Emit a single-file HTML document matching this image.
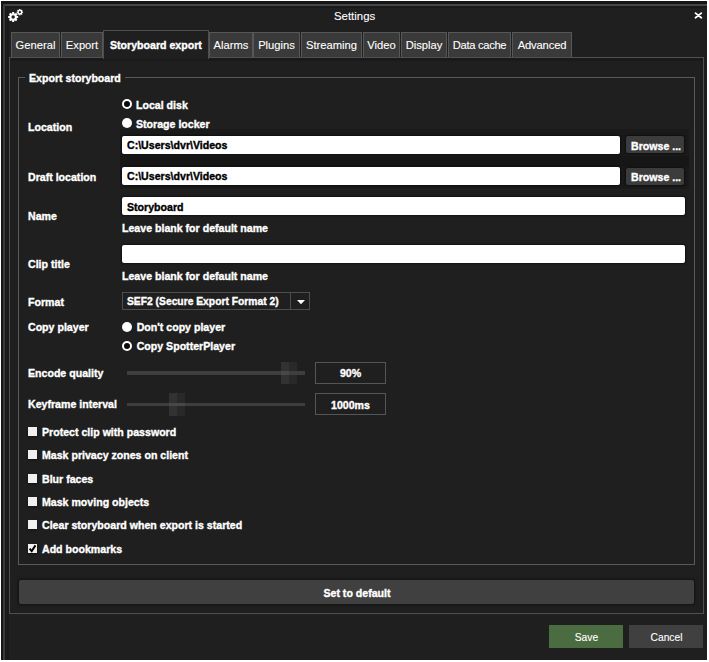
<!DOCTYPE html>
<html><head><meta charset="utf-8"><style>
html,body{margin:0;padding:0;}
body{width:709px;height:662px;position:relative;overflow:hidden;background:#fff;font-family:"Liberation Sans",sans-serif;}
.t{position:absolute;white-space:nowrap;line-height:12px;-webkit-text-stroke:0.35px currentColor;}
.r{position:absolute;}
</style></head><body>
<div class="r" style="left:1px;top:1px;width:706px;height:659px;background:#1f1f1f;"></div>
<div class="r" style="left:1px;top:1px;width:706px;height:3px;background:#151515;"></div>
<div class="r" style="left:1px;top:6px;width:706px;height:2px;background:#191919;"></div>
<div class="r" style="left:1px;top:1px;width:2px;height:659px;background:#151515;"></div>
<div class="r" style="left:5px;top:6px;width:4px;height:654px;background:#1a1a1a;"></div>
<div class="r" style="left:3px;top:4px;width:704px;height:2px;background:#464646;"></div>
<div class="r" style="left:3px;top:4px;width:2px;height:656px;background:#3a3a3a;"></div>
<svg class="r" style="left:0px;top:0px" width="30" height="30" viewBox="0 0 30 30"><circle cx="13.15" cy="17.0" r="3.8" fill="#fff"/><rect x="12.15" y="12.0" width="2.0" height="10.0" fill="#fff" transform="rotate(0.0 13.15 17.0)"/><rect x="12.15" y="12.0" width="2.0" height="10.0" fill="#fff" transform="rotate(45.0 13.15 17.0)"/><rect x="12.15" y="12.0" width="2.0" height="10.0" fill="#fff" transform="rotate(90.0 13.15 17.0)"/><rect x="12.15" y="12.0" width="2.0" height="10.0" fill="#fff" transform="rotate(135.0 13.15 17.0)"/><circle cx="13.15" cy="17.0" r="1.7" fill="#1f1f1f"/><circle cx="19.85" cy="12.2" r="2.4" fill="#fff"/><rect x="19.200000000000003" y="9.0" width="1.3" height="6.4" fill="#fff" transform="rotate(0.0 19.85 12.2)"/><rect x="19.200000000000003" y="9.0" width="1.3" height="6.4" fill="#fff" transform="rotate(45.0 19.85 12.2)"/><rect x="19.200000000000003" y="9.0" width="1.3" height="6.4" fill="#fff" transform="rotate(90.0 19.85 12.2)"/><rect x="19.200000000000003" y="9.0" width="1.3" height="6.4" fill="#fff" transform="rotate(135.0 19.85 12.2)"/><circle cx="19.85" cy="12.2" r="1.1" fill="#1f1f1f"/></svg>
<div class="t" style="left:334px;top:10.35px;font-size:11.4px;font-weight:normal;color:#fff;-webkit-text-stroke:0.1px currentColor;">Settings</div>
<svg class="r" style="left:693px;top:10px" width="11" height="11" viewBox="0 0 11 11"><path d="M2.5 3.1 L8.3 7.7 M8.3 3.1 L2.5 7.7" stroke="#fff" stroke-width="1.8" stroke-linecap="round"/></svg>
<div class="r" style="left:9px;top:57px;width:695px;height:557px;border:1px solid #505050;box-sizing:border-box;"></div>
<div class="r" style="left:10px;top:58px;width:693px;height:3px;background:#1a1a1a;"></div>
<div class="r" style="left:11px;top:32px;width:49px;height:25px;background:#3a3a3a;border:1px solid #575757;border-bottom:none;box-sizing:border-box;"></div>
<div class="t" style="left:6px;top:38.92px;font-size:11.2px;font-weight:normal;color:#fff;-webkit-text-stroke:0.1px currentColor;width:59px;text-align:center;letter-spacing:0;">General</div>
<div class="r" style="left:61px;top:32px;width:42px;height:25px;background:#3a3a3a;border:1px solid #575757;border-bottom:none;box-sizing:border-box;"></div>
<div class="t" style="left:56px;top:38.92px;font-size:11.2px;font-weight:normal;color:#fff;-webkit-text-stroke:0.1px currentColor;width:52px;text-align:center;letter-spacing:0;">Export</div>
<div class="r" style="left:103px;top:30px;width:106px;height:29px;background:#1f1f1f;border:1px solid #4e4e4e;border-bottom:none;box-sizing:border-box;"></div>
<div class="t" style="left:110px;top:39.33px;font-size:10.6px;font-weight:bold;color:#fff;">Storyboard export</div>
<div class="r" style="left:209px;top:32px;width:44px;height:25px;background:#3a3a3a;border:1px solid #575757;border-bottom:none;box-sizing:border-box;"></div>
<div class="t" style="left:204px;top:38.92px;font-size:11.2px;font-weight:normal;color:#fff;-webkit-text-stroke:0.1px currentColor;width:54px;text-align:center;letter-spacing:0;">Alarms</div>
<div class="r" style="left:253px;top:32px;width:47px;height:25px;background:#3a3a3a;border:1px solid #575757;border-bottom:none;box-sizing:border-box;"></div>
<div class="t" style="left:248px;top:38.92px;font-size:11.2px;font-weight:normal;color:#fff;-webkit-text-stroke:0.1px currentColor;width:57px;text-align:center;letter-spacing:0;">Plugins</div>
<div class="r" style="left:301px;top:32px;width:61px;height:25px;background:#3a3a3a;border:1px solid #575757;border-bottom:none;box-sizing:border-box;"></div>
<div class="t" style="left:296px;top:38.92px;font-size:11.2px;font-weight:normal;color:#fff;-webkit-text-stroke:0.1px currentColor;width:71px;text-align:center;letter-spacing:0;">Streaming</div>
<div class="r" style="left:363px;top:32px;width:37px;height:25px;background:#3a3a3a;border:1px solid #575757;border-bottom:none;box-sizing:border-box;"></div>
<div class="t" style="left:358px;top:38.92px;font-size:11.2px;font-weight:normal;color:#fff;-webkit-text-stroke:0.1px currentColor;width:47px;text-align:center;letter-spacing:0;">Video</div>
<div class="r" style="left:401px;top:32px;width:46px;height:25px;background:#3a3a3a;border:1px solid #575757;border-bottom:none;box-sizing:border-box;"></div>
<div class="t" style="left:396px;top:38.92px;font-size:11.2px;font-weight:normal;color:#fff;-webkit-text-stroke:0.1px currentColor;width:56px;text-align:center;letter-spacing:0;">Display</div>
<div class="r" style="left:448px;top:32px;width:63px;height:25px;background:#3a3a3a;border:1px solid #575757;border-bottom:none;box-sizing:border-box;"></div>
<div class="t" style="left:443px;top:38.92px;font-size:11.2px;font-weight:normal;color:#fff;-webkit-text-stroke:0.1px currentColor;width:73px;text-align:center;letter-spacing:-0.3px;">Data cache</div>
<div class="r" style="left:512px;top:32px;width:60px;height:25px;background:#3a3a3a;border:1px solid #575757;border-bottom:none;box-sizing:border-box;"></div>
<div class="t" style="left:507px;top:38.92px;font-size:11.2px;font-weight:normal;color:#fff;-webkit-text-stroke:0.1px currentColor;width:70px;text-align:center;letter-spacing:-0.15px;">Advanced</div>
<div class="r" style="left:18px;top:77px;width:677px;height:488px;border:1px solid #5a5a5a;box-sizing:border-box;"></div>
<div class="r" style="left:25px;top:72px;width:100px;height:10px;background:#1f1f1f;"></div>
<div class="t" style="left:29px;top:72.23px;font-size:10.6px;font-weight:bold;color:#fff;">Export storyboard</div>
<div class="r" style="left:120px;top:129px;width:569px;height:60px;background:#1a1a1a;"></div>
<div class="r" style="left:120px;top:156px;width:569px;height:10px;background:#161616;"></div>
<div class="t" style="left:28px;top:120.93px;font-size:10.6px;font-weight:bold;color:#fff;">Location</div>
<div class="t" style="left:28px;top:171.03px;font-size:10.6px;font-weight:bold;color:#fff;">Draft location</div>
<div class="t" style="left:28px;top:210.13px;font-size:10.6px;font-weight:bold;color:#fff;">Name</div>
<div class="t" style="left:28px;top:257.53px;font-size:10.6px;font-weight:bold;color:#fff;">Clip title</div>
<div class="t" style="left:28px;top:295.53px;font-size:10.6px;font-weight:bold;color:#fff;">Format</div>
<div class="t" style="left:28px;top:320.83px;font-size:10.6px;font-weight:bold;color:#fff;">Copy player</div>
<div class="t" style="left:28px;top:366.83px;font-size:10.6px;font-weight:bold;color:#fff;">Encode quality</div>
<div class="t" style="left:28px;top:398.03px;font-size:10.6px;font-weight:bold;color:#fff;">Keyframe interval</div>
<div class="r" style="left:122.2px;top:99.3px;width:10px;height:10px;border-radius:50%;border:2.2px solid #fff;box-sizing:border-box;background:#0a0a0a;"></div>
<div class="t" style="left:136px;top:98.53px;font-size:10.6px;font-weight:bold;color:#fff;">Local disk</div>
<div class="r" style="left:122.2px;top:117.9px;width:10px;height:10px;border-radius:50%;background:#fff;"></div>
<div class="t" style="left:136px;top:117.53px;font-size:10.6px;font-weight:bold;color:#fff;">Storage locker</div>
<div class="r" style="left:122px;top:136px;width:498px;height:18px;background:#fff;border-radius:2px;box-shadow:0 0 2px 1px rgba(0,0,0,0.45);"></div>
<div class="t" style="left:127px;top:139.33px;font-size:10.6px;font-weight:bold;color:#000;">C:\Users\dvr\Videos</div>
<div class="r" style="left:626px;top:136px;width:58px;height:17px;background:#3c3c3c;border-radius:2px;box-shadow:0 0 2px 1px rgba(0,0,0,0.45);"></div>
<div class="t" style="left:631px;top:139.53px;font-size:10.6px;font-weight:bold;color:#fff;">Browse ...</div>
<div class="r" style="left:122px;top:167px;width:498px;height:18px;background:#fff;border-radius:2px;box-shadow:0 0 2px 1px rgba(0,0,0,0.45);"></div>
<div class="t" style="left:127px;top:170.13px;font-size:10.6px;font-weight:bold;color:#000;">C:\Users\dvr\Videos</div>
<div class="r" style="left:626px;top:168px;width:58px;height:17px;background:#3c3c3c;border-radius:2px;box-shadow:0 0 2px 1px rgba(0,0,0,0.45);"></div>
<div class="t" style="left:631px;top:170.83px;font-size:10.6px;font-weight:bold;color:#fff;">Browse ...</div>
<div class="r" style="left:122px;top:197px;width:563px;height:18px;background:#fff;border-radius:2px;box-shadow:0 0 2px 1px rgba(0,0,0,0.45);"></div>
<div class="t" style="left:127px;top:200.83px;font-size:10.6px;font-weight:bold;color:#000;">Storyboard</div>
<div class="t" style="left:122px;top:222.33px;font-size:10.6px;font-weight:bold;color:#fff;">Leave blank for default name</div>
<div class="r" style="left:122px;top:245px;width:563px;height:18px;background:#fff;border-radius:2px;box-shadow:0 0 2px 1px rgba(0,0,0,0.45);"></div>
<div class="t" style="left:122px;top:270.13px;font-size:10.6px;font-weight:bold;color:#fff;">Leave blank for default name</div>
<div class="r" style="left:122px;top:292px;width:188px;height:18px;border:1px solid #4e4e4e;box-sizing:border-box;"></div>
<div class="r" style="left:290px;top:292px;width:1px;height:18px;background:#4e4e4e;"></div>
<div class="t" style="left:127px;top:295.83px;font-size:10.3px;font-weight:bold;color:#fff;">SEF2 (Secure Export Format 2)</div>
<svg class="r" style="left:297px;top:300px" width="8" height="5" viewBox="0 0 8 5"><path d="M0 0 H8 L4 4.3 Z" fill="#fff"/></svg>
<div class="r" style="left:121.5px;top:321.5px;width:10px;height:10px;border-radius:50%;background:#fff;"></div>
<div class="t" style="left:136.7px;top:321.03px;font-size:10.6px;font-weight:bold;color:#fff;">Don't copy player</div>
<div class="r" style="left:121.5px;top:341px;width:10px;height:10px;border-radius:50%;border:2.2px solid #fff;box-sizing:border-box;background:#0a0a0a;"></div>
<div class="t" style="left:136.7px;top:339.83px;font-size:10.6px;font-weight:bold;color:#fff;">Copy SpotterPlayer</div>
<div class="r" style="left:281px;top:362px;width:8px;height:22px;background:#323232;"></div>
<div class="r" style="left:289px;top:362px;width:8px;height:22px;background:#292929;"></div>
<div class="r" style="left:127px;top:371px;width:178px;height:4px;background:#3e3e3e;"></div>
<div class="r" style="left:281px;top:371px;width:8px;height:4px;background:#484848;"></div>
<div class="r" style="left:315px;top:362px;width:71px;height:22px;border:1px solid #555;box-sizing:border-box;"></div>
<div class="t" style="left:315px;top:367.03px;font-size:10.6px;font-weight:bold;color:#fff;width:71px;text-align:center;">90%</div>
<div class="r" style="left:169px;top:393px;width:8px;height:23px;background:#323232;"></div>
<div class="r" style="left:177px;top:393px;width:8px;height:23px;background:#292929;"></div>
<div class="r" style="left:127px;top:403px;width:178px;height:3px;background:#3e3e3e;"></div>
<div class="r" style="left:169px;top:403px;width:16px;height:3px;background:#484848;"></div>
<div class="r" style="left:315px;top:393px;width:71px;height:22px;border:1px solid #555;box-sizing:border-box;"></div>
<div class="t" style="left:315px;top:398.63px;font-size:10.6px;font-weight:bold;color:#fff;width:71px;text-align:center;">1000ms</div>
<div class="r" style="left:28px;top:427px;width:9px;height:9px;background:#f0f0f0;box-shadow:0 1px 2px rgba(0,0,0,0.5);"></div>
<div class="t" style="left:42px;top:426.03px;font-size:10.6px;font-weight:bold;color:#fff;">Protect clip with password</div>
<div class="r" style="left:28px;top:450px;width:9px;height:9px;background:#f0f0f0;box-shadow:0 1px 2px rgba(0,0,0,0.5);"></div>
<div class="t" style="left:42px;top:449.33px;font-size:10.6px;font-weight:bold;color:#fff;">Mask privacy zones on client</div>
<div class="r" style="left:28px;top:474px;width:9px;height:9px;background:#f0f0f0;box-shadow:0 1px 2px rgba(0,0,0,0.5);"></div>
<div class="t" style="left:42px;top:472.63px;font-size:10.6px;font-weight:bold;color:#fff;">Blur faces</div>
<div class="r" style="left:28px;top:497px;width:9px;height:9px;background:#f0f0f0;box-shadow:0 1px 2px rgba(0,0,0,0.5);"></div>
<div class="t" style="left:42px;top:495.93px;font-size:10.6px;font-weight:bold;color:#fff;">Mask moving objects</div>
<div class="r" style="left:28px;top:520px;width:9px;height:9px;background:#f0f0f0;box-shadow:0 1px 2px rgba(0,0,0,0.5);"></div>
<div class="t" style="left:42px;top:519.23px;font-size:10.6px;font-weight:bold;color:#fff;">Clear storyboard when export is started</div>
<div class="r" style="left:28px;top:544px;width:9px;height:9px;background:#f0f0f0;box-shadow:0 1px 2px rgba(0,0,0,0.5);"></div>
<svg class="r" style="left:28px;top:544px" width="9" height="9" viewBox="0 0 9 9"><path d="M1.6 4.6 L3.7 7.1 L7.5 1.4" stroke="#000" stroke-width="1.9" fill="none"/></svg>
<div class="t" style="left:42px;top:542.53px;font-size:10.6px;font-weight:bold;color:#fff;">Add bookmarks</div>
<div class="r" style="left:19px;top:580px;width:675px;height:24px;background:#404040;border-radius:2px;box-shadow:0 0 3px 1px rgba(0,0,0,0.45);"></div>
<div class="t" style="left:20px;top:586.83px;font-size:10.6px;font-weight:bold;color:#fff;width:674px;text-align:center;">Set to default</div>
<div class="r" style="left:549px;top:625px;width:74px;height:23px;background:#4b6c40;"></div>
<div class="t" style="left:549.5px;top:631.63px;font-size:10.3px;font-weight:normal;color:#fff;-webkit-text-stroke:0.1px currentColor;width:74px;text-align:center;">Save</div>
<div class="r" style="left:629px;top:625px;width:74px;height:23px;background:#404040;"></div>
<div class="t" style="left:629.5px;top:631.63px;font-size:10.3px;font-weight:normal;color:#fff;-webkit-text-stroke:0.1px currentColor;width:74px;text-align:center;">Cancel</div>
</body></html>
